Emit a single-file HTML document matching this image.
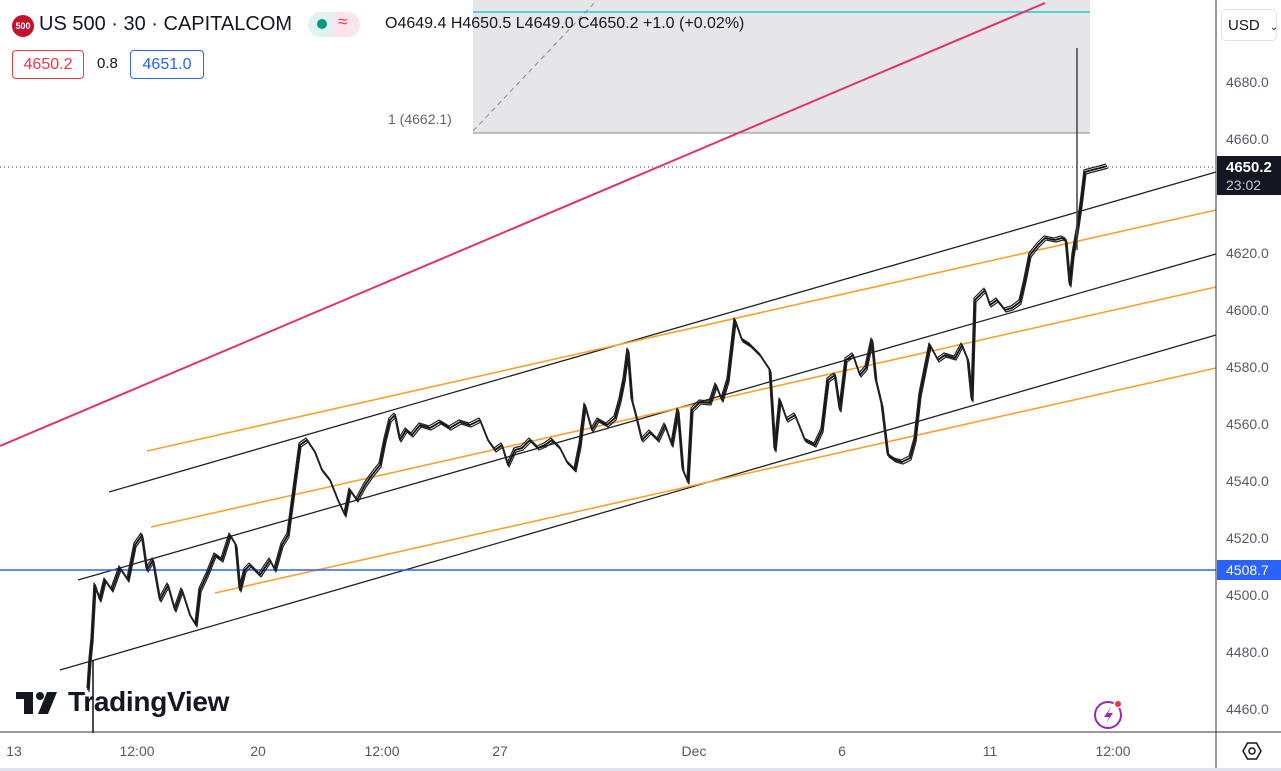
<!DOCTYPE html>
<html><head><meta charset="utf-8"><style>
html,body{margin:0;padding:0;background:#fff;}
body{width:1281px;height:771px;position:relative;overflow:hidden;font-family:"Liberation Sans",sans-serif;}
.t{position:absolute;white-space:nowrap;}
.pl{position:absolute;left:1226px;font-size:14px;color:#555a66;}
.bl{position:absolute;top:743px;font-size:14px;color:#555a66;transform:translateX(-50%);}
</style></head><body>
<svg width="1281" height="771" style="position:absolute;left:0;top:0">
<defs>
<polyline id="pr" fill="none" stroke-linejoin="round" points="88,690 90,660 92,640 95,585 100,600 105,580 112,590 120,568 128,580 135,545 142,535 147,570 153,560 160,600 168,585 175,610 182,590 190,615 196,625 200,590 207,575 215,555 222,560 230,535 236,545 240,590 245,570 250,565 260,575 270,560 275,570 282,545 288,535 292,505 296,475 300,445 307,440 315,452 322,470 330,480 338,500 345,515 350,490 357,500 365,485 372,475 380,465 385,440 390,420 395,415 400,440 406,430 412,435 420,425 430,428 440,422 450,428 460,422 470,425 480,420 488,440 495,450 502,445 508,465 515,450 522,448 530,440 538,448 545,445 552,440 560,448 567,462 575,470 580,445 585,405 592,430 598,420 607,425 615,418 620,400 624,380 628,350 632,400 636,415 642,440 650,432 658,440 665,425 672,445 678,410 683,470 688,482 692,410 700,402 710,403 716,385 722,400 728,380 735,320 742,340 750,345 760,355 770,370 775,450 780,400 787,420 795,415 805,440 815,445 822,430 828,380 835,375 840,410 846,360 853,355 860,375 866,368 872,340 876,380 882,405 888,455 895,460 902,462 910,458 915,440 920,395 926,365 930,345 938,360 945,355 955,358 962,345 968,360 972,400 975,300 985,290 990,305 997,300 1005,310 1012,308 1020,302 1025,280 1030,255 1038,245 1045,238 1055,240 1062,238 1066,240 1070,285 1073,255 1077,232 1081,205 1085,172 1092,170 1100,168 1107,166"/>
</defs>
<rect x="473" y="0" width="617" height="133" fill="#e6e6e8"/>
<line x1="473" y1="133" x2="1090" y2="133" fill="none" stroke="#888" stroke-width="1"/>
<line x1="473" y1="12" x2="1090" y2="12" stroke="#22c5d8" stroke-width="1.5"/>
<line x1="473" y1="131" x2="597" y2="0" stroke="#888" stroke-dasharray="5,4"/>
<line x1="0" y1="167" x2="1216" y2="167" stroke="#333" stroke-dasharray="1,3"/>
<line x1="0" y1="446" x2="1045" y2="3" stroke="#e0336b" stroke-width="2"/>
<line x1="109" y1="492" x2="1216" y2="172" stroke="#222" stroke-width="1.3"/>
<line x1="78" y1="580" x2="1216" y2="254" stroke="#222" stroke-width="1.3"/>
<line x1="60" y1="670" x2="1216" y2="335" stroke="#222" stroke-width="1.3"/>
<line x1="147" y1="451" x2="1216" y2="210" stroke="#f7a22a" stroke-width="1.6"/>
<line x1="151" y1="527" x2="1216" y2="287" stroke="#f7a22a" stroke-width="1.6"/>
<line x1="215" y1="593" x2="1216" y2="368" stroke="#f7a22a" stroke-width="1.6"/>
<line x1="0" y1="570" x2="1216" y2="570" stroke="#2962ff" stroke-width="1.5"/>
<use href="#pr" stroke="#111" stroke-width="1.8"/>
<use href="#pr" stroke="#222" stroke-width="1.2" transform="translate(1,2)"/>
<use href="#pr" stroke="#222" stroke-width="1.2" transform="translate(-1,-2)"/>
<line x1="1077" y1="48" x2="1077" y2="250" stroke="#444" stroke-width="1.5"/>
<line x1="93" y1="660" x2="93" y2="733" stroke="#111" stroke-width="1.5"/>
<line x1="1216" y1="0" x2="1216" y2="771" stroke="#333" stroke-width="1"/>
<line x1="0" y1="732" x2="1281" y2="732" stroke="#333" stroke-width="1"/>
<rect x="0" y="768" width="1281" height="3" fill="#e0e3eb"/>
<rect x="1217" y="156" width="64" height="39" fill="#131722"/>
<rect x="1217" y="560" width="64" height="20" fill="#2962ff"/>
<g transform="translate(1252,751)" fill="none" stroke="#131722" stroke-width="1.5"><polygon points="-9,0 -4.5,-8 4.5,-8 9,0 4.5,8 -4.5,8"/><circle r="3"/></g>
<g transform="translate(1108,715)"><circle r="13" fill="none" stroke="#9c27b0" stroke-width="2"/><path d="M3,-8 L-4,2 L1,2 L-2,8 L5,-2 L0,-2 Z" fill="#9c27b0"/><circle cx="10" cy="-11" r="4.5" fill="#fff"/><circle cx="10" cy="-11" r="3" fill="#f23645"/></g>
<g fill="#131722"><rect x="16" y="692" width="17" height="7"/><rect x="24" y="692" width="9" height="22"/><circle cx="40" cy="696" r="4"/><polygon points="47,692 57,692 48,714 38,714"/></g>
</svg>
<div class="t" style="left:68px;top:686px;font-size:28px;font-weight:bold;color:#131722;letter-spacing:-0.3px">TradingView</div>
<div class="t" style="left:12px;top:15px;width:22px;height:22px;border-radius:50%;background:#c8102e;color:#fff;font-size:9px;font-weight:bold;text-align:center;line-height:22px">500</div>
<div class="t" style="left:39px;top:13px;font-size:20px;color:#131722">US 500 · 30 · CAPITALCOM</div>
<div class="t" style="left:308px;top:12px;width:52px;height:25px;border-radius:13px;background:linear-gradient(90deg,#e0f3ef 50%,#fde4ea 50%)"></div>
<div class="t" style="left:317px;top:19px;width:10px;height:10px;border-radius:50%;background:#089981"></div>
<div class="t" style="left:338px;top:12px;font-size:17px;color:#f23645">≈</div>
<div class="t" style="left:385px;top:15px;font-size:16px;color:#131722">O4649.4 H4650.5 L4649.0 C4650.2 +1.0 (+0.02%)</div>
<div class="t" style="left:12px;top:50px;width:70px;height:27px;border:1px solid #f23645;border-radius:4px;color:#f23645;font-size:16px;text-align:center;line-height:27px">4650.2</div>
<div class="t" style="left:97px;top:55px;font-size:15px;color:#131722">0.8</div>
<div class="t" style="left:130px;top:50px;width:72px;height:27px;border:1px solid #2962ff;border-radius:4px;color:#2962ff;font-size:16px;text-align:center;line-height:27px">4651.0</div>
<div class="t" style="left:388px;top:111px;font-size:14px;color:#666">1 (4662.1)</div>
<div class="t" style="left:1221px;top:9px;width:56px;height:32px;border:1px solid #e0e3eb;border-radius:5px;font-size:15px;color:#131722;line-height:32px;padding-left:6px;box-sizing:border-box">USD <span style="font-size:10px;margin-left:6px">⌄</span></div>
<div class="pl" style="top:74px">4680.0</div>
<div class="pl" style="top:131px">4660.0</div>
<div class="pl" style="top:245px">4620.0</div>
<div class="pl" style="top:302px">4600.0</div>
<div class="pl" style="top:359px">4580.0</div>
<div class="pl" style="top:416px">4560.0</div>
<div class="pl" style="top:473px">4540.0</div>
<div class="pl" style="top:530px">4520.0</div>
<div class="pl" style="top:587px">4500.0</div>
<div class="pl" style="top:644px">4480.0</div>
<div class="pl" style="top:701px">4460.0</div>
<div class="pl" style="top:159px;color:#fff;font-weight:bold;font-size:15px">4650.2</div>
<div class="pl" style="top:177px;color:#ccc;font-size:14px">23:02</div>
<div class="pl" style="top:562px;color:#fff;font-size:14px">4508.7</div>
<div class="bl" style="left:14px">13</div>
<div class="bl" style="left:137px">12:00</div>
<div class="bl" style="left:258px">20</div>
<div class="bl" style="left:382px">12:00</div>
<div class="bl" style="left:500px">27</div>
<div class="bl" style="left:694px">Dec</div>
<div class="bl" style="left:842px">6</div>
<div class="bl" style="left:990px">11</div>
<div class="bl" style="left:1113px">12:00</div>
</body></html>
